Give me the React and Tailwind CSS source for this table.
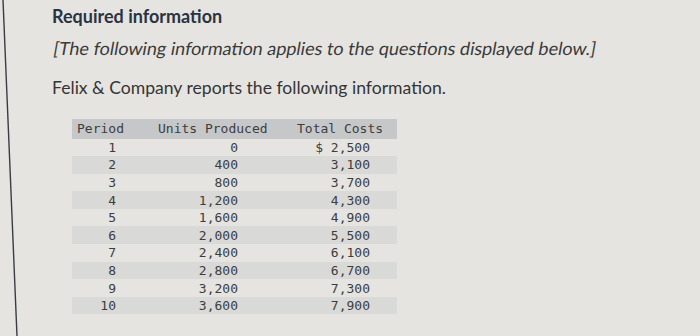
const rows = [
  ['1', '0', '$ 2,500'],
  ['2', '400', '3,100'],
  ['3', '800', '3,700'],
  ['4', '1,200', '4,300'],
  ['5', '1,600', '4,900'],
  ['6', '2,000', '5,500'],
  ['7', '2,400', '6,100'],
  ['8', '2,800', '6,700'],
  ['9', '3,200', '7,300'],
  ['10', '3,600', '7,900'],
];

export default function App() {
  return (
    <div className="relative w-[700px] h-[336px] overflow-hidden bg-[#e5e4e1]">
      {/* edge of the monitor frame in the photo */}
      <svg className="absolute left-0 top-0" width="40" height="336">
        <line x1="3" y1="0" x2="17" y2="336" stroke="#3b3b45" strokeWidth="1.4" />
      </svg>

      <div className="pl-[52px] pt-[6px]" style={{ fontFamily: 'Lato, "Open Sans", sans-serif' }}>
        <h1 className="text-[18px] leading-[20px] font-bold text-[#2b3341]">Required information</h1>
        <p className="mt-[12px] text-[18px] leading-[20px] text-[#3a3a3a]">
          <span className="inline-block -skew-x-[10deg] origin-bottom-left">
            [The following information applies to the questions displayed below.]
          </span>
        </p>
        <p className="mt-[20px] text-[17.6px] leading-[20px] text-[#353535]">
          Felix &amp; Company reports the following information.
        </p>
      </div>

      <table
        className="ml-[72px] mt-[21px] border-collapse text-[13px] text-[#3d3d3d]"
        style={{ fontFamily: '"DejaVu Sans Mono", "Liberation Mono", monospace' }}
      >
        <thead>
          <tr className="bg-[#c6c7c9] h-[19px]">
            <th className="w-[68px] p-0 pl-[5px] text-left font-normal">Period</th>
            <th className="w-[146px] p-0 pl-[18px] text-left font-normal">Units Produced</th>
            <th className="w-[111px] p-0 pl-[11px] text-left font-normal">Total Costs</th>
          </tr>
        </thead>
        <tbody>
          {rows.map((r, i) => (
            <tr key={r[0]} className={`h-[17.6px] ${i % 2 === 1 ? 'bg-[#d9d9d8]' : ''}`}>
              <td className="p-0 pr-[24px] text-right leading-[17px]">{r[0]}</td>
              <td className="p-0 pr-[48px] text-right leading-[17px]">{r[1]}</td>
              <td className="p-0 pr-[27px] text-right leading-[17px]">{r[2]}</td>
            </tr>
          ))}
        </tbody>
      </table>
    </div>
  );
}
